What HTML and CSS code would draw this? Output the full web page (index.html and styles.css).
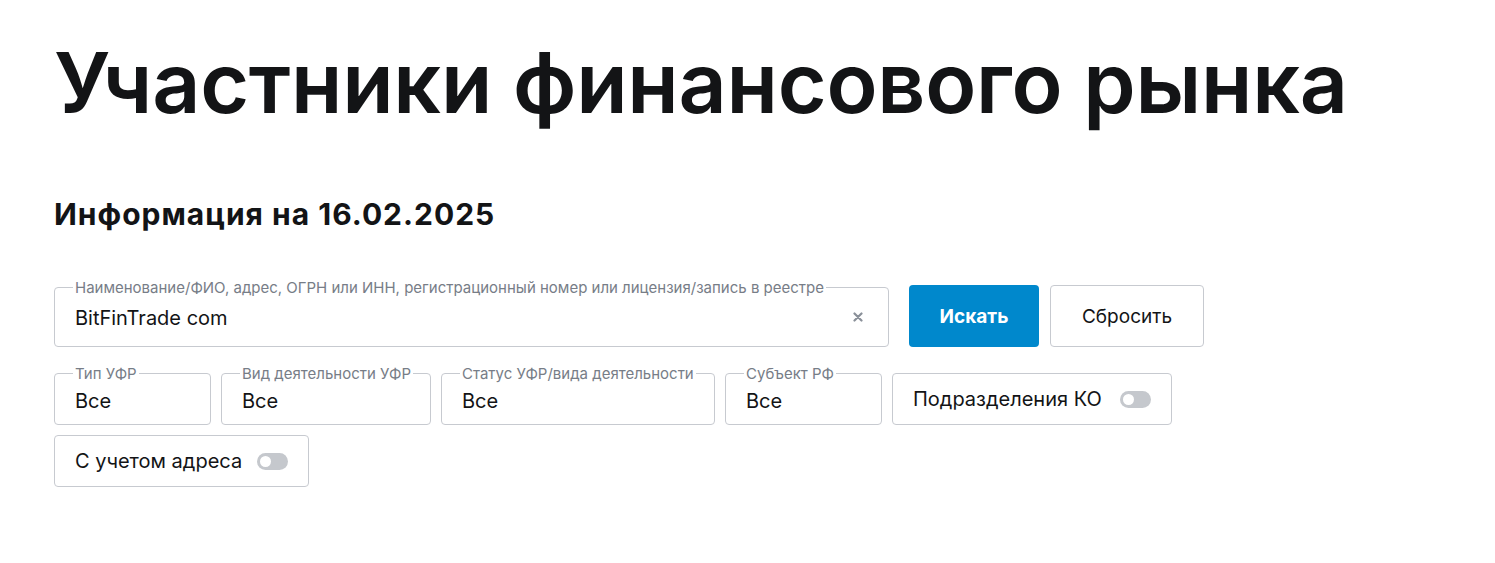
FILE: index.html
```html
<!DOCTYPE html>
<html lang="ru">
<head>
<meta charset="utf-8">
<title>Участники финансового рынка</title>
<link rel="stylesheet" href="styles.css">
</head>
<body>
<main class="page">
  <h1 class="title">Участники финансового рынка</h1>
  <h2 class="subtitle">Информация на 16.02.2025</h2>

  <form class="filters">
    <div class="row row-main">
      <div class="field field-search">
        <span class="field-label">Наименование/ФИО, адрес, ОГРН или ИНН, регистрационный номер или лицензия/запись в реестре</span>
        <span class="field-value">BitFinTrade com</span>
        <span class="clear" aria-label="Очистить">
          <svg width="10" height="10" viewBox="0 0 10 10"><path d="M1.5 1.5l7 7M8.5 1.5l-7 7" stroke="#8a9099" stroke-width="2.2" stroke-linecap="round"/></svg>
        </span>
      </div>
      <button type="button" class="btn btn-primary">Искать</button>
      <button type="button" class="btn btn-secondary">Сбросить</button>
    </div>

    <div class="row">
      <div class="field field-type">
        <span class="field-label">Тип УФР</span>
        <span class="field-value">Все</span>
      </div>
      <div class="field field-activity">
        <span class="field-label">Вид деятельности УФР</span>
        <span class="field-value">Все</span>
      </div>
      <div class="field field-status">
        <span class="field-label">Статус УФР/вида деятельности</span>
        <span class="field-value">Все</span>
      </div>
      <div class="field field-region">
        <span class="field-label">Субъект РФ</span>
        <span class="field-value">Все</span>
      </div>
      <label class="switch-box switch-branches">
        <span>Подразделения КО</span>
        <span class="switch"></span>
      </label>
    </div>

    <div class="row">
      <label class="switch-box switch-address">
        <span>С учетом адреса</span>
        <span class="switch"></span>
      </label>
    </div>
  </form>
</main>
</body>
</html>
```

FILE: styles.css
```css
* { box-sizing: border-box; }

body {
  margin: 0;
  background: #fff;
  color: #131416;
  font-family: Inter, "Noto Sans", sans-serif;
}

.page {
  padding: 28px 54px 0;
}

.title {
  margin: 0;
  font-size: 84px;
  font-weight: 600;
  line-height: 110px;
  letter-spacing: -0.25px;
  color: #131416;
}

.subtitle {
  margin: 58px 0 0;
  font-size: 30px;
  font-weight: 700;
  line-height: 36px;
  letter-spacing: 1px;
  color: #131416;
}

.filters {
  margin-top: 53px;
  display: flex;
  flex-direction: column;
  gap: 10px;
}

.row {
  display: flex;
  align-items: flex-end;
  gap: 10px;
}

.row-main {
  margin-bottom: 16px;
}

.field {
  position: relative;
  height: 52px;
  border: 1px solid #c7cad0;
  border-radius: 4px;
  padding: 0 20px;
  display: flex;
  align-items: center;
}

.field-label {
  position: absolute;
  top: -9px;
  left: 18px;
  padding: 0 2px;
  background: #fff;
  font-size: 15px;
  line-height: 18px;
  color: #777d87;
  white-space: nowrap;
}

.field-value {
  font-size: 20px;
  line-height: 24px;
  padding-top: 3px;
  color: #131416;
}

.field-search {
  width: 835px;
  height: 60px;
}

.field-search .field-value { padding-top: 2px; }

.clear {
  position: absolute;
  right: 25px;
  top: 24px;
  display: flex;
}

.field-type { width: 157px; }
.field-activity { width: 210px; }
.field-status { width: 274px; }
.field-region { width: 157px; }

.btn {
  height: 62px;
  border-radius: 4px;
  font-family: inherit;
  font-size: 19px;
  cursor: pointer;
}

.btn-primary {
  width: 130px;
  margin-left: 10px;
  border: 0;
  background: #0088cc;
  color: #fff;
  font-weight: 700;
}

.btn-secondary {
  width: 154px;
  margin-left: 1px;
  border: 1px solid #c7cad0;
  background: #fff;
  color: #131416;
  font-weight: 400;
}

.switch-box {
  height: 52px;
  border: 1px solid #c7cad0;
  border-radius: 4px;
  padding: 0 20px;
  display: flex;
  align-items: center;
  justify-content: space-between;
  font-size: 20px;
  color: #131416;
}

.switch-branches { width: 280px; }
.switch-address { width: 255px; }

.switch {
  position: relative;
  width: 31px;
  height: 17px;
  border-radius: 9px;
  background: #c5c8cd;
}

.switch::after {
  content: "";
  position: absolute;
  left: 3px;
  top: 3px;
  width: 11px;
  height: 11px;
  border-radius: 50%;
  background: #fff;
}
```
